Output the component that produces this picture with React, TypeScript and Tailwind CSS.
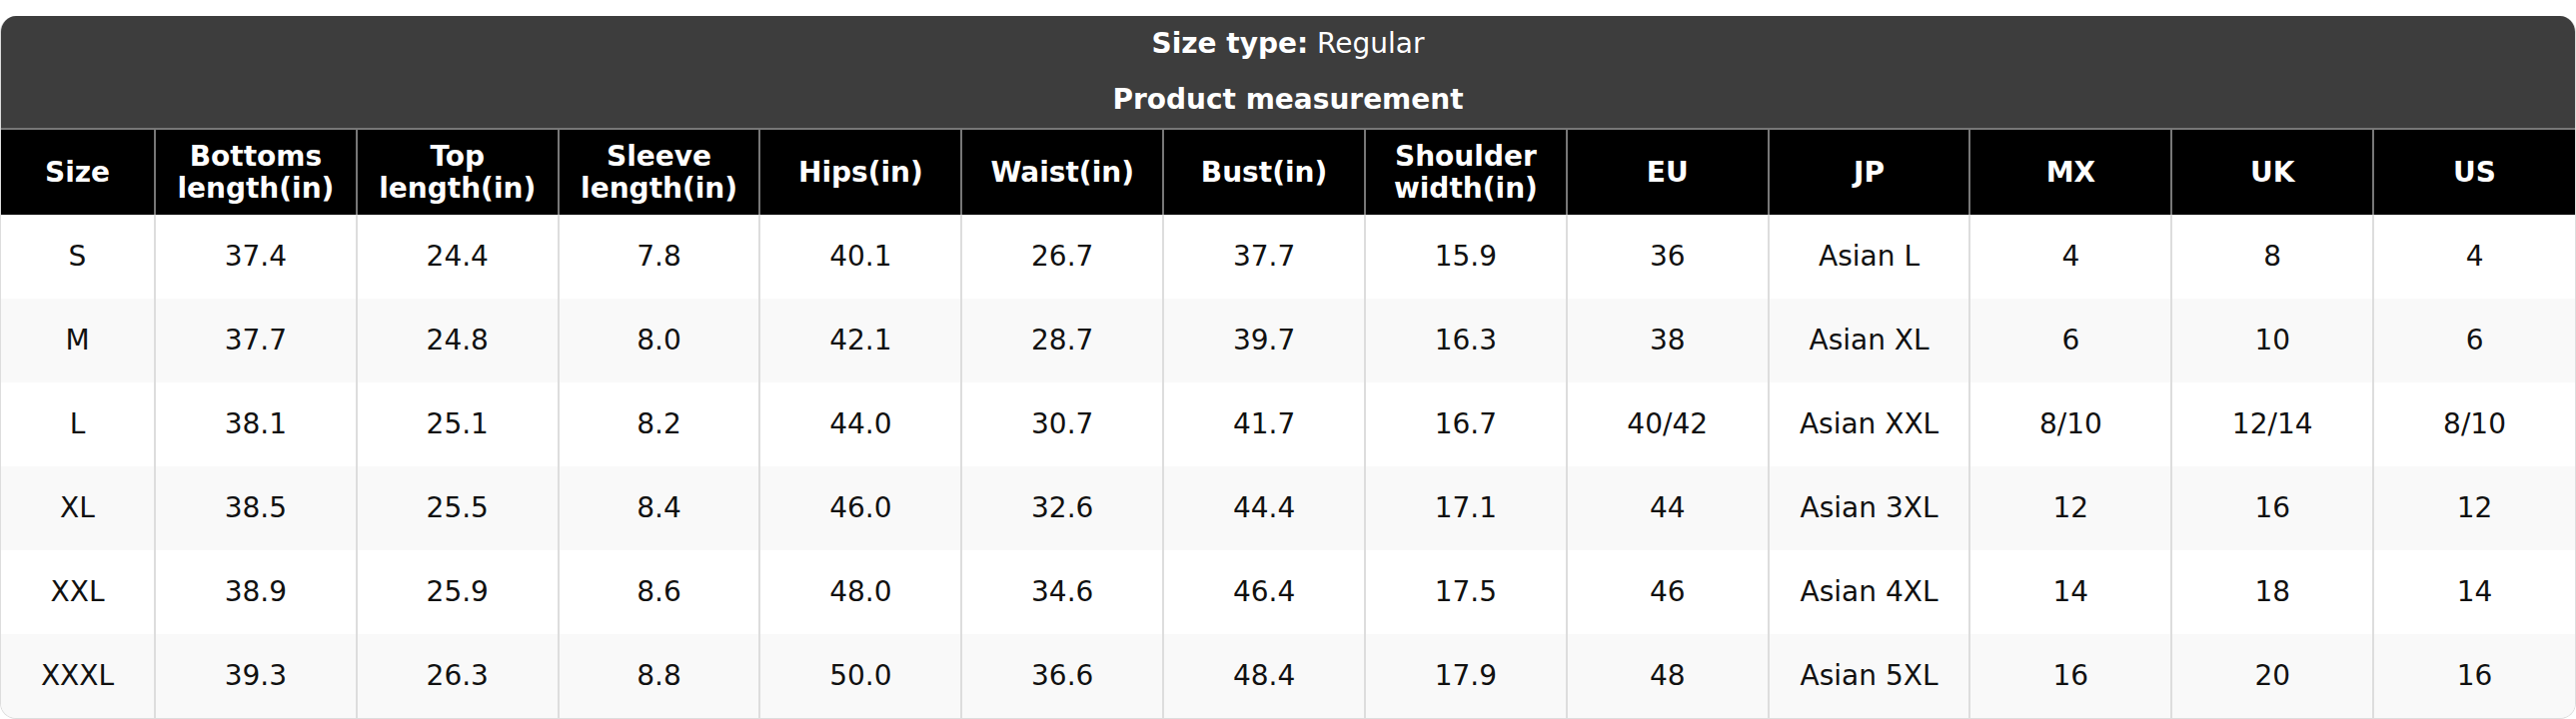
import React from "react";

const headers: string[][] = [
  ["Size"],
  ["Bottoms", "length(in)"],
  ["Top", "length(in)"],
  ["Sleeve", "length(in)"],
  ["Hips(in)"],
  ["Waist(in)"],
  ["Bust(in)"],
  ["Shoulder", "width(in)"],
  ["EU"],
  ["JP"],
  ["MX"],
  ["UK"],
  ["US"],
];

const rows: string[][] = [
  ["S", "37.4", "24.4", "7.8", "40.1", "26.7", "37.7", "15.9", "36", "Asian L", "4", "8", "4"],
  ["M", "37.7", "24.8", "8.0", "42.1", "28.7", "39.7", "16.3", "38", "Asian XL", "6", "10", "6"],
  ["L", "38.1", "25.1", "8.2", "44.0", "30.7", "41.7", "16.7", "40/42", "Asian XXL", "8/10", "12/14", "8/10"],
  ["XL", "38.5", "25.5", "8.4", "46.0", "32.6", "44.4", "17.1", "44", "Asian 3XL", "12", "16", "12"],
  ["XXL", "38.9", "25.9", "8.6", "48.0", "34.6", "46.4", "17.5", "46", "Asian 4XL", "14", "18", "14"],
  ["XXXL", "39.3", "26.3", "8.8", "50.0", "36.6", "48.4", "17.9", "48", "Asian 5XL", "16", "20", "16"],
];

export default function App() {
  return (
    <div className="w-[2578px] h-[720px] bg-white pt-[16px] font-['DejaVu_Sans',sans-serif]">
      <div className="rounded-[16px] overflow-hidden border border-[#dddddd] border-t-0">
        <div className="bg-[#3d3d3d] text-white text-center">
          <div className="h-[56px] flex items-center justify-center text-[28px] leading-none">
            <span className="font-bold">Size type:</span>
            <span>&nbsp;Regular</span>
          </div>
          <div className="h-[56px] flex items-center justify-center text-[28px] leading-none font-bold">
            Product measurement
          </div>
        </div>
        <table className="w-full table-fixed border-collapse">
          <colgroup>
            <col className="w-[154px]" />
            {headers.slice(1).map((_, i) => (
              <col key={i} />
            ))}
          </colgroup>
          <thead>
            <tr className="bg-black text-white">
              {headers.map((h, i) => (
                <th
                  key={i}
                  className="h-[86px] border-x-2 border-t-2 border-b-0 border-[#777777] first:border-l-0 last:border-r-0 text-center font-bold text-[28px] leading-[32px] p-0"
                >
                  {h.map((line, j) => (
                    <div key={j}>{line}</div>
                  ))}
                </th>
              ))}
            </tr>
          </thead>
          <tbody>
            {rows.map((r, ri) => (
              <tr key={ri} className={ri % 2 === 1 ? "bg-[#f9f9f9]" : "bg-white"}>
                {r.map((c, ci) => (
                  <td
                    key={ci}
                    className="h-[84px] border-l-2 border-[#dddddd] first:border-l-0 text-center text-[28px] leading-[32px] text-[#111111] p-0"
                  >
                    {c}
                  </td>
                ))}
              </tr>
            ))}
          </tbody>
        </table>
      </div>
    </div>
  );
}
